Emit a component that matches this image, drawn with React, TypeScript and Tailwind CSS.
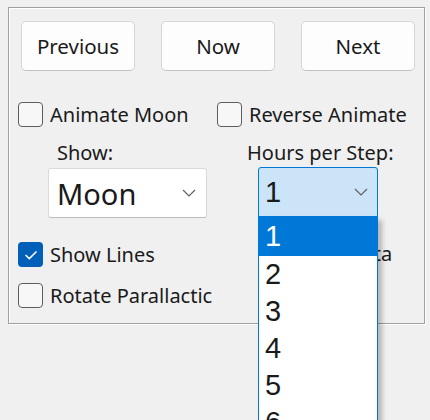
import React from "react";

const font = { fontFamily: '"Noto Sans", "Open Sans", sans-serif' };

const Chevron = () => (
  <svg width="14" height="8" viewBox="0 0 14 8" fill="none" className="shrink-0">
    <path d="M1 1l6 6 6-6" stroke="#5f5f5f" strokeWidth="1.2" />
  </svg>
);

const Check = ({ label, checked = false }: { label: string; checked?: boolean }) => (
  <div className="flex h-[25px] items-center gap-[7px]">
    {checked ? (
      <div className="flex h-[25px] w-[25px] items-center justify-center rounded-[4px] bg-[#005fb8]">
        <svg width="14" height="10" viewBox="0 0 14 10" fill="none">
          <path d="M1.5 5l3.8 3.6L12.5 1.5" stroke="#fff" strokeWidth="1.5" />
        </svg>
      </div>
    ) : (
      <div className="h-[25px] w-[25px] rounded-[4px] border-[1.5px] border-[#5d5d5d] bg-[#f7f7f7]" />
    )}
    <span className="whitespace-nowrap text-[20px] leading-[25px] text-[#1a1a1a]">{label}</span>
  </div>
);

const Button = ({ label }: { label: string }) => (
  <button className="h-[50px] w-[114px] rounded-[5px] border border-[#d6d6d6] border-b-[#c2c2c2] bg-[#fdfdfd] text-[20.5px] text-[#1a1a1a]">
    {label}
  </button>
);

const hours = [1, 2, 3, 4, 5, 6, 7, 8];

export default function App() {
  return (
    <div className="h-[420px] w-[430px] overflow-hidden bg-[#f0f0f0] pl-2 pt-[7px]" style={font}>
      <div className="h-[317px] w-[417px] border border-[#a0a0a0] shadow-[1px_1px_0_#fff,inset_1px_1px_0_#fff]">
        <div className="ml-[12px] mt-[13px] flex gap-[26px]">
          <Button label="Previous" />
          <Button label="Now" />
          <Button label="Next" />
        </div>

        <div className="mt-[31px] flex pl-[9px]">
          {/* left column */}
          <div className="flex w-[199px] flex-col">
            <Check label="Animate Moon" />
            <div className="ml-[39px] mt-[12px] h-[28px] text-[20px] leading-[28px] text-[#1a1a1a]">Show:</div>
            <div className="ml-[30px] mt-[1px] flex h-[50px] w-[159px] items-center justify-between rounded-[3px] border border-[#dadada] border-b-[#bcbcbc] bg-white pl-[8px] pr-[10px]">
              <span className="text-[29px] leading-none text-[#1a1a1a]">Moon</span>
              <Chevron />
            </div>
            <div className="mt-[24px]">
              <Check label="Show Lines" checked />
            </div>
            <div className="mt-[16px]">
              <Check label="Rotate Parallactic" />
            </div>
          </div>

          {/* right column */}
          <div className="flex flex-col">
            <Check label="Reverse Animate" />
            <div className="ml-[30px] mt-[12px] h-[28px] text-[20px] leading-[28px] text-[#1a1a1a]">Hours per Step:</div>
            <div className="relative z-10 ml-[41px] w-[120px]">
              <div className="flex h-[50px] items-center justify-between rounded-t-[3px] border border-[#0078d7] bg-[#cce4f7] pl-[6px] pr-[9px]">
                <span className="text-[29px] leading-none text-[#1a1a1a]" style={{ fontFamily: '"Liberation Sans", Arial, sans-serif' }}>
                  1
                </span>
                <Chevron />
              </div>
              <div
                className="absolute left-0 top-[49px] w-[120px] border border-[#0078d7] bg-white shadow-[4px_4px_5px_rgba(0,0,0,0.25)]"
                style={{ fontFamily: '"Liberation Sans", Arial, sans-serif' }}
              >
                {hours.map((h) => (
                  <div
                    key={h}
                    className={`flex items-center pl-[6px] text-[29px] leading-none ${
                      h === 1 ? "h-[39px] bg-[#0078d7] text-white" : "h-[37px] text-[#1a1a1a]"
                    }`}
                  >
                    {h}
                  </div>
                ))}
              </div>
            </div>
            <div className="ml-[43px] mt-[24px]">
              <Check label="Show Data" />
            </div>
          </div>
        </div>
      </div>
    </div>
  );
}
